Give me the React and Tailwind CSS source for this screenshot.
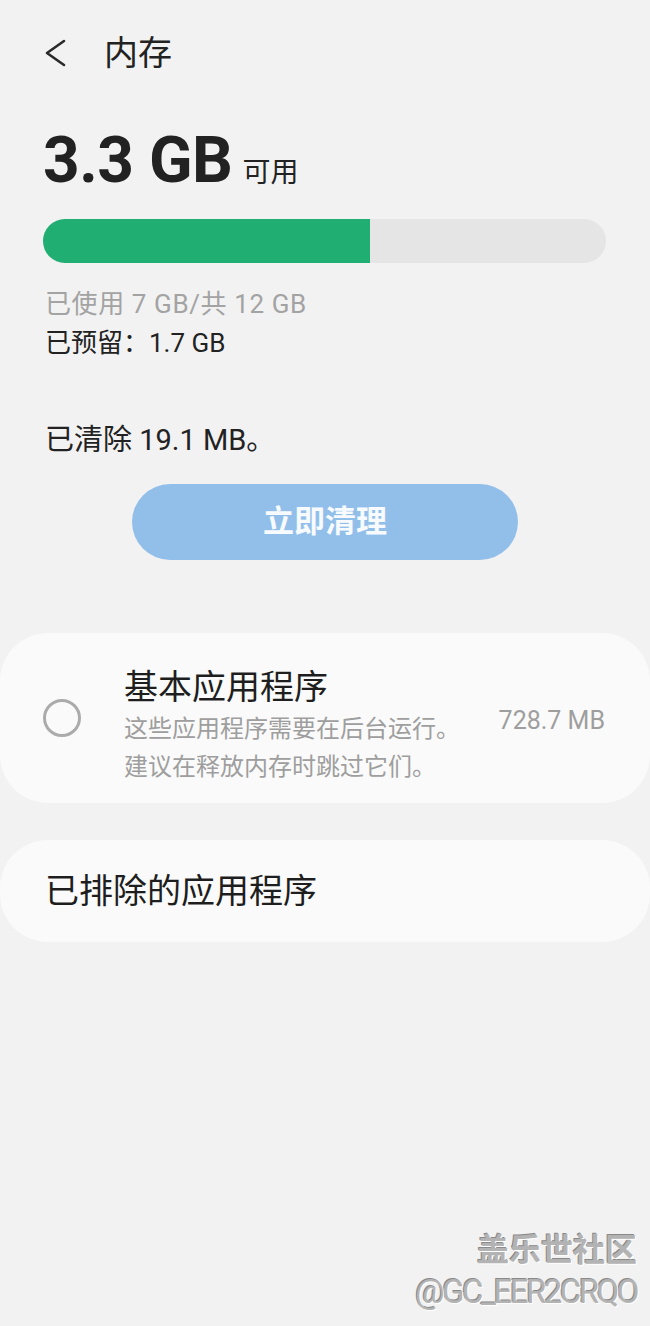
import React from 'react'

const font = "font-['Roboto','Noto_Sans_CJK_SC',sans-serif]"

const BackArrow = () => (
    <svg width="22" height="28" viewBox="0 0 22 28" fill="none">
        <polyline points="19,2 2,14 19,26" stroke="#2a2a2a" strokeWidth="2.6" strokeLinecap="round" strokeLinejoin="round" />
    </svg>
)

const App = () => {
    const used = 58

    return (
        <div className={`relative min-h-[1326px] pt-[27px] bg-[#f2f2f2] text-[#222] ${font}`}>
            {/* header */}
            <div className="flex items-center h-[52px] pl-[45px]">
                <BackArrow />
                <span className="ml-[37px] text-[34px] leading-[52px]">内存</span>
            </div>

            {/* available memory */}
            <div className="flex items-baseline mt-[50px] pl-[43px]">
                <span className="text-[64px] leading-none font-bold tracking-[-0.5px]">3.3 GB</span>
                <span className="ml-[10px] text-[28px] leading-none">可用</span>
            </div>

            <div className="mt-[26px] ml-[43px] mr-[44px] h-[44px] rounded-full bg-[#e5e5e5] overflow-hidden flex">
                <div className="h-full bg-[#20ae73]" style={{ width: `${used}%` }}></div>
            </div>

            <div className="mt-[22px] pl-[45px]">
                <p className="text-[26px] leading-[39px] text-[#a3a3a3] tracking-[0.6px]">已使用 7 GB/共 12 GB</p>
                <p className="text-[26px] leading-[39px]">已预留：1.7 GB</p>
            </div>

            <p className="mt-[57px] pl-[45px] text-[29px] leading-[40px]">已清除 19.1 MB。</p>

            <div className="flex justify-center mt-[24px]">
                <button className="w-[386px] h-[76px] rounded-full bg-[#92bfe9] text-[#f7faff] text-[31px] font-bold">
                    立即清理
                </button>
            </div>

            {/* essential apps */}
            <div className="mt-[73px] h-[170px] rounded-[48px] bg-[#fafafa] flex items-center pl-[43px] pr-[45px]">
                <div className="w-[38px] h-[38px] rounded-full border-[3px] border-[#ababab] shrink-0"></div>
                <div className="ml-[43px] flex-1 pt-[14px]">
                    <p className="text-[34px] leading-[46px] text-[#1e1e1e]">基本应用程序</p>
                    <p className="text-[24px] leading-[38px] text-[#9e9e9e]">这些应用程序需要在后台运行。</p>
                    <p className="text-[24px] leading-[38px] text-[#9e9e9e]">建议在释放内存时跳过它们。</p>
                </div>
                <span className="text-[25px] text-[#9e9e9e] mt-[6px]">728.7 MB</span>
            </div>

            {/* excluded apps */}
            <div className="mt-[37px] h-[102px] rounded-[48px] bg-[#fafafa] flex items-center px-[45px]">
                <span className="text-[34px] text-[#1e1e1e]">已排除的应用程序</span>
            </div>

            {/* watermark */}
            <div className="absolute right-[13px] bottom-[14px] flex flex-col items-end text-[#b3b3b3] [text-shadow:1px_1px_0_#ffffff,-1px_-1px_0_#8a8a8a]">
                <span className="text-[32px] leading-[44px] font-bold">盖乐世社区</span>
                <span className="text-[33px] leading-[40px] tracking-[-2.5px]">@GC_EER2CRQO</span>
            </div>
        </div>
    )
}

export default App
